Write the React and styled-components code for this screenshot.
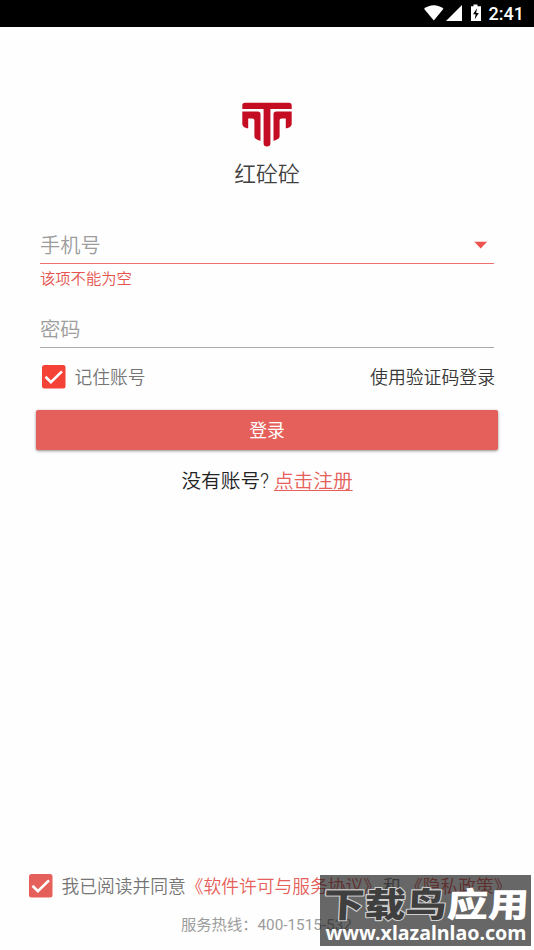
import styled, { createGlobalStyle } from "styled-components";

const GlobalStyle = createGlobalStyle`
  * {
    box-sizing: border-box;
  }

  body {
    margin: 0;
    background: #fefefe;
    font-family: Roboto, "Noto Sans CJK SC", sans-serif;
  }
`;

const Screen = styled.div`
  position: relative;
  width: 534px;
  height: 950px;
  display: flex;
  flex-direction: column;
  overflow: hidden;
  background: #fefefe;
  white-space: nowrap;
`;

const StatusBar = styled.header`
  display: flex;
  justify-content: flex-end;
  align-items: center;
  height: 27px;
  padding-right: 10px;
  background: #000;
  color: #fff;
`;

const Clock = styled.span`
  font-size: 18px;
  font-weight: 500;
  line-height: 26px;
  margin-left: 5px;
`;

const Brand = styled.div`
  display: flex;
  flex-direction: column;
  align-items: center;
  padding-top: 75px;
`;

const BrandName = styled.h1`
  margin: 11px 0 0;
  font-size: 21.8px;
  font-weight: 350;
  line-height: 32px;
  color: #404040;
`;

const Form = styled.form`
  display: flex;
  flex-direction: column;
  padding: 34px 40px 0;
`;

const Field = styled.div`
  display: flex;
  align-items: center;
  justify-content: space-between;
  height: 39px;
  padding: 0 6px 0 0;
  border-bottom: 1px solid ${(props) => props.$line};
  font-size: 20.2px;
  font-weight: 350;
  color: #9c9c9c;
`;

const ErrorText = styled.p`
  margin: 4px 0 18px;
  font-size: 15.3px;
  font-weight: 350;
  line-height: 23px;
  color: #e5544f;
`;

const Options = styled.div`
  display: flex;
  align-items: center;
  height: 26px;
  margin: 16px -1px 0 2px;
`;

const CheckLabel = styled.span`
  margin-left: 8.5px;
  padding-top: 2px;
  font-size: 17.75px;
  font-weight: 350;
  line-height: 26px;
  color: #757575;
`;

const CodeLogin = styled.a`
  margin-left: auto;
  padding-top: 2px;
  font-size: 17.85px;
  font-weight: 350;
  line-height: 26px;
  color: #383838;
`;

const LoginButton = styled.button`
  height: 40px;
  margin: 20px -4px 0;
  padding: 0 0 2px;
  border: 0;
  border-radius: 2px;
  background: #e5605a;
  box-shadow: 0 1px 3px rgba(0, 0, 0, 0.45);
  font-family: inherit;
  font-size: 17.85px;
  font-weight: 400;
  color: #fff;
`;

const Register = styled.p`
  margin: 17px 0 0;
  text-align: center;
  font-size: 19.7px;
  font-weight: 350;
  line-height: 30px;
  color: #222;
`;

const RegisterLink = styled.a`
  color: #e5605a;
  text-decoration: underline;
  text-decoration-thickness: 1px;
  text-underline-offset: 2px;
`;

const Footer = styled.footer`
  display: flex;
  flex-direction: column;
  margin-top: auto;
  padding-bottom: 13px;
`;

const Agreement = styled.div`
  display: flex;
  align-items: center;
  height: 26px;
  padding-left: 29px;
`;

const AgreementLink = styled.span`
  color: #e5605a;
`;

const And = styled.span`
  margin-left: 2px;
`;

const Hotline = styled.p`
  margin: 15px 0 0;
  padding-left: 181px;
  font-size: 15.3px;
  font-weight: 370;
  line-height: 23px;
  color: #9c9c9c;
`;

const Watermark = styled.div`
  position: absolute;
  left: 320px;
  top: 875px;
  width: 211px;
  height: 71px;
  background: rgba(22, 22, 22, 0.65);
`;

const CheckBox = ({ color }) => (
  <svg width="24" height="24" viewBox="0 0 24 24">
    <rect width="23.5" height="23.5" rx="2.5" fill={color} />
    <path d="M3.500 11.800l5.400 5.300L20 6.400" fill="none" stroke="#fff" strokeWidth="2.7" />
  </svg>
);

const StatusIcons = () => (
  <svg width="60" height="27" viewBox="0 0 60 27" fill="#fff">
    <path d="M0 8.800C5.500 4.100 14 4.100 19.500 8.800L9.800 20.500z" />
    <path d="M38 5v16H22z" />
    <path d="M47 6.200h2.500V4.500h4v1.700H57V21H47z" />
    <path d="M53 8.200l-4 6h2.600l-.8 5 4-6.300h-2.600z" fill="#000" />
  </svg>
);

const Logo = () => (
  <svg width="50" height="46" viewBox="0 0 50 46" fill="#c40d23">
    <path d="M3 .7h44c1.800 0 2.700.9 2.700 2.700V7H28.400v34.800c0 1.500-1.200 2.700-3.400 2.700s-3.400-1.200-3.400-2.700V7H.3V3.400C.3 1.600 1.200.7 3 .7z" />
    <path id="arm" d="M.3 9.600h15.300c2 0 2.900.9 2.900 2.900v26.300c-3.600-.8-6.100-2-6.100-4.700V19c0-1.600-.7-2.400-2.200-2.400H6.200v9.700C2.800 25.900.3 24.500.3 21.700z" />
    <use href="#arm" transform="matrix(-1 0 0 1 50 0)" />
  </svg>
);

const App = () => {
  return (
    <>
      <GlobalStyle />
      <Screen>
        <StatusBar>
          <StatusIcons />
          <Clock>2:41</Clock>
        </StatusBar>
        <Brand>
          <Logo />
          <BrandName>红砼砼</BrandName>
        </Brand>
        <Form>
          <Field $line="#f07070">
            手机号
            <svg width="14" height="10" viewBox="0 0 14 10">
              <path d="M.3 2.800h12.800L6.700 9.400z" fill="#ef5350" />
            </svg>
          </Field>
          <ErrorText>该项不能为空</ErrorText>
          <Field $line="#ababab">密码</Field>
          <Options>
            <CheckBox color="#f44336" />
            <CheckLabel>记住账号</CheckLabel>
            <CodeLogin>使用验证码登录</CodeLogin>
          </Options>
          <LoginButton type="button">登录</LoginButton>
          <Register>
            没有账号? <RegisterLink>点击注册</RegisterLink>
          </Register>
        </Form>
        <Footer>
          <Agreement>
            <CheckBox color="#e5605a" />
            <CheckLabel>
              我已阅读并同意<AgreementLink>《软件许可与服务协议》</AgreementLink>
              <And>和 </And>
              <AgreementLink>《隐私政策》</AgreementLink>
            </CheckLabel>
          </Agreement>
          <Hotline>服务热线：400-1515-532</Hotline>
        </Footer>
        <Watermark>
          <svg width="211" height="71" viewBox="0 0 211 71" fontFamily='"Noto Sans CJK SC", sans-serif' fontWeight="900">
            <g fontSize="41" strokeLinejoin="round" transform="translate(0 42) skewX(-3) scale(1 .83)">
              <text x="3" fill="#3f3f3f" stroke="#d0d0d0" strokeWidth="2.500" paintOrder="stroke">下载鸟</text>
              <text x="126.500" fill="#fff">应用</text>
            </g>
            <text x="5.500" y="64.500" fontSize="19.500" fontFamily='"Noto Sans", sans-serif' fontWeight="700" fill="#fff" textLength="201" lengthAdjust="spacingAndGlyphs">www.xlazalnlao.com</text>
          </svg>
        </Watermark>
      </Screen>
    </>
  );
};

export default App;
